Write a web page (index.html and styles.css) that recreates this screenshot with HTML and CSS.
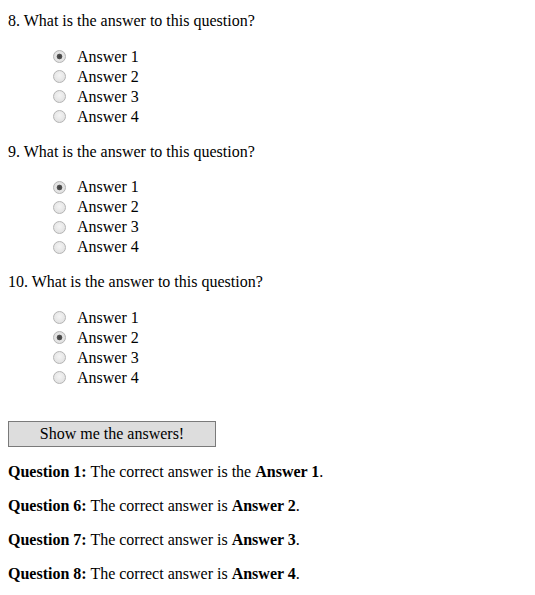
FILE: index.html
```html
<!DOCTYPE html>
<html>
<head>
<meta charset="utf-8">
<link rel="stylesheet" href="styles.css">
</head>
<body>
<div class="quiz">
  <div class="q">
    <p class="q-title">8. What is the answer to this question?</p>
    <ul class="answers">
      <li><input type="radio" name="q8" checked><span>Answer 1</span></li>
      <li><input type="radio" name="q8"><span>Answer 2</span></li>
      <li><input type="radio" name="q8"><span>Answer 3</span></li>
      <li><input type="radio" name="q8"><span>Answer 4</span></li>
    </ul>
  </div>
  <div class="q">
    <p class="q-title">9. What is the answer to this question?</p>
    <ul class="answers">
      <li><input type="radio" name="q9" checked><span>Answer 1</span></li>
      <li><input type="radio" name="q9"><span>Answer 2</span></li>
      <li><input type="radio" name="q9"><span>Answer 3</span></li>
      <li><input type="radio" name="q9"><span>Answer 4</span></li>
    </ul>
  </div>
  <div class="q">
    <p class="q-title">10. What is the answer to this question?</p>
    <ul class="answers">
      <li><input type="radio" name="q10"><span>Answer 1</span></li>
      <li><input type="radio" name="q10" checked><span>Answer 2</span></li>
      <li><input type="radio" name="q10"><span>Answer 3</span></li>
      <li><input type="radio" name="q10"><span>Answer 4</span></li>
    </ul>
  </div>
</div>
<button class="show-btn" type="button">Show me the answers!</button>
<div class="results">
  <p><b>Question 1:</b> The correct answer is the <b>Answer 1</b>.</p>
  <p><b>Question 6:</b> The correct answer is <b>Answer 2</b>.</p>
  <p><b>Question 7:</b> The correct answer is <b>Answer 3</b>.</p>
  <p><b>Question 8:</b> The correct answer is <b>Answer 4</b>.</p>
</div>
</body>
</html>
```
FILE: styles.css
```css
html, body {
  background: #ffffff;
}
body {
  margin: 0;
  padding: 12px 8px 0 8px;
  font-family: "Liberation Serif", "Times New Roman", serif;
  font-size: 16px;
  color: #000000;
}
.quiz {
  display: flex;
  flex-direction: column;
}
.q-title {
  margin: 0;
  line-height: 18px;
}
.answers {
  list-style: none;
  margin: 16.5px 0 16px 0;
  padding: 0 0 0 45px;
}
.answers li {
  display: flex;
  align-items: center;
  height: 20px;
}
.answers input {
  -webkit-appearance: none;
  appearance: none;
  width: 13px;
  height: 13px;
  margin: 0 11px 0 0;
  border-radius: 50%;
  border: 1px solid #b4b4b4;
  background: radial-gradient(circle at 50% 40%, #f4f4f4 0%, #dcdcdc 100%);
  box-sizing: border-box;
  flex: none;
}
.answers input:checked {
  background: radial-gradient(circle, #3c3c3c 0, #555555 2.5px, #e6e6e6 3.2px, #dcdcdc 100%);
}
.show-btn {
  display: block;
  margin: 17.5px 0 16px 0;
  width: 208px;
  height: 26px;
  padding: 0;
  font-family: "Liberation Serif", "Times New Roman", serif;
  font-size: 16px;
  color: #000000;
  background: #dddddd;
  border: 1px solid #7a7a7a;
  border-radius: 0;
}
.results p {
  margin: 0 0 16px 0;
  line-height: 18px;
}
```
